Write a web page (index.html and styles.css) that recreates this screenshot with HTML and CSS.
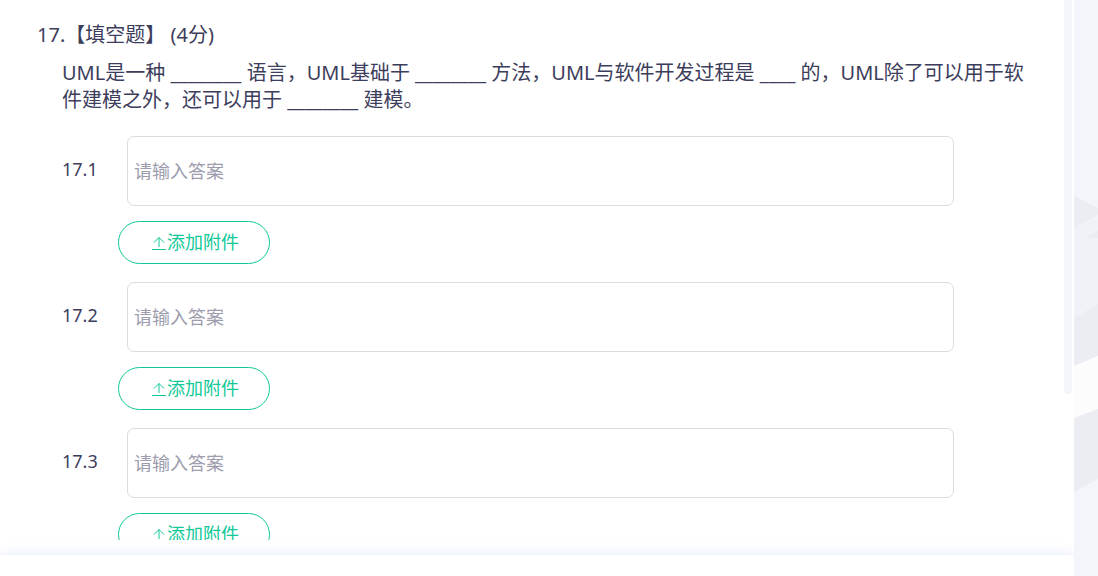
FILE: index.html
```html
<!DOCTYPE html>
<html lang="zh-CN">
<head>
<meta charset="utf-8">
<title>填空题</title>
<link rel="stylesheet" href="styles.css">
</head>
<body>
<div class="page">
  <main class="panel">
    <div class="scroll-area">
      <section class="question">
        <h1 class="question-title">17.【填空题】 (4分)</h1>
        <div class="question-body">
          <p class="question-text">UML是一种 ________ 语言，UML基础于 ________ 方法，UML与软件开发过程是 ____ 的，UML除了可以用于软件建模之外，还可以用于 ________ 建模。</p>
          <div class="answer">
            <label class="answer-label" for="answer-1">17.1</label>
            <textarea class="answer-input" id="answer-1" placeholder="请输入答案"></textarea>
            <button class="attach" type="button"><svg class="attach-icon" viewBox="0 0 14 16" aria-hidden="true"><path d="M7 12V2.5M2 7.5l5-5 5 5M0 14.5h14"/></svg>添加附件</button>
          </div>
          <div class="answer">
            <label class="answer-label" for="answer-2">17.2</label>
            <textarea class="answer-input" id="answer-2" placeholder="请输入答案"></textarea>
            <button class="attach" type="button"><svg class="attach-icon" viewBox="0 0 14 16" aria-hidden="true"><path d="M7 12V2.5M2 7.5l5-5 5 5M0 14.5h14"/></svg>添加附件</button>
          </div>
          <div class="answer">
            <label class="answer-label" for="answer-3">17.3</label>
            <textarea class="answer-input" id="answer-3" placeholder="请输入答案"></textarea>
            <button class="attach" type="button"><svg class="attach-icon" viewBox="0 0 14 16" aria-hidden="true"><path d="M7 12V2.5M2 7.5l5-5 5 5M0 14.5h14"/></svg>添加附件</button>
          </div>
        </div>
      </section>
      <div class="scroll-track"><div class="scroll-thumb"></div></div>
    </div>
    <footer class="bottom-bar"></footer>
  </main>
  <aside class="backdrop">
    <svg class="backdrop-art" viewBox="0 0 24 576" preserveAspectRatio="xMidYMin slice" aria-hidden="true">
      <rect class="art-base" width="24" height="576"/>
      <path class="art-mid" d="M0 229L24 217V304L0 318z"/>
      <path class="art-dark" d="M0 196L24 208V215L0 229z"/>
      <path class="art-dark" d="M10 238L24 230V238z"/>
      <path class="art-dark" d="M0 318L24 304V356L0 366z"/>
      <path class="art-light" d="M0 366L24 356V409L0 418z"/>
      <path class="art-dark" d="M0 418L24 409V479L0 492z"/>
    </svg>
  </aside>
</div>
</body>
</html>
```
FILE: styles.css
```css
* {
  box-sizing: border-box;
}

body {
  margin: 0;
  background: #f4f5fa;
  color: #3d3d5c;
  font-family: "Noto Sans", "Noto Sans CJK SC", sans-serif;
  font-size: 20px;
  line-height: 27px;
}

.page {
  display: flex;
  height: 100vh;
  overflow: hidden;
}

.panel {
  flex: 1;
  min-width: 0;
  display: flex;
  flex-direction: column;
  background: #fff;
}

.scroll-area {
  flex: 1;
  min-height: 0;
  display: flex;
  margin-bottom: 15px;
  overflow: hidden;
}

.question {
  flex: 1;
  min-width: 0;
  padding: 21px 24px 0 37px;
}

.question-title {
  margin: 0;
  font-size: 20px;
  font-weight: 400;
}

.question-body {
  padding: 11px 0 0 25px;
}

.question-text {
  margin: 0 0 23px;
}

.answer {
  display: grid;
  grid-template-columns: 56px 1fr;
  padding-right: 86px;
  margin-bottom: 18px;
  font-size: 18px;
}

.answer-label {
  padding-top: 20px;
}

.answer-input {
  display: block;
  width: calc(100% - 9px);
  height: 70px;
  margin-left: 9px;
  padding: 21px 6px;
  border: 1px solid #dcdcdf;
  border-radius: 7px;
  background: #fff;
  color: inherit;
  font: inherit;
  resize: none;
  overflow: hidden;
}

.answer-input::placeholder {
  color: #9d9dae;
  opacity: 1;
}

.attach {
  grid-column: 2;
  justify-self: start;
  display: flex;
  align-items: center;
  justify-content: center;
  gap: 1px;
  width: 152px;
  height: 43px;
  margin-top: 15px;
  padding: 0 0 0 3px;
  border: 1px solid #10c898;
  border-radius: 22px;
  background: #fff;
  color: #10c898;
  font: inherit;
}

.attach-icon {
  width: 14px;
  height: 16px;
  fill: none;
  stroke: currentColor;
  stroke-width: 1;
}

.scroll-track {
  width: 10px;
  padding-right: 2px;
}

.scroll-thumb {
  height: 73%;
  border-radius: 0 0 4px 4px;
  background: #f4f5fa;
}

.bottom-bar {
  height: 21px;
  border-radius: 0 5px 0 0;
  background: #fff;
  box-shadow: 0 0 14px rgba(80, 110, 240, 0.16);
}

.backdrop {
  flex: none;
  width: 24px;
}

.backdrop-art {
  display: block;
  width: 100%;
  height: 100%;
}

.art-base {
  fill: #f4f5fa;
}

.art-mid {
  fill: #f1f2f7;
}

.art-dark {
  fill: #ecedf3;
}

.art-light {
  fill: #fcfcfd;
}
```
